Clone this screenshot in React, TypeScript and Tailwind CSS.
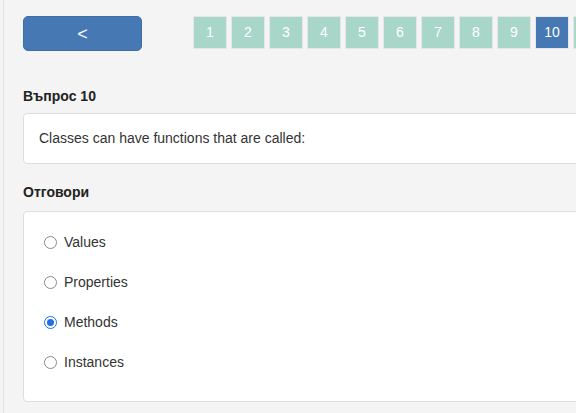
const pages = [1, 2, 3, 4, 5, 6, 7, 8, 9, 10, 11];

const answers = [
    { label: 'Values', checked: false },
    { label: 'Properties', checked: false },
    { label: 'Methods', checked: true },
    { label: 'Instances', checked: false },
];

const Radio = ({ checked }: { checked: boolean }) => (
    <span
        className={`
      flex items-center justify-center w-[13px] h-[13px] rounded-full shrink-0
      ${checked ? 'border border-[#1f6fe5] bg-white' : 'border border-[#8a8a8a] bg-white'}
    `}
    >
        {checked && <span className="w-[7px] h-[7px] rounded-full bg-[#1f6fe5]" />}
    </span>
);

const App = () => {
    return (
        <div
            className="w-[576px] h-[413px] bg-[#f4f4f4] overflow-hidden"
            style={{ fontFamily: '"Liberation Sans", Arial, sans-serif' }}
        >
            <div className="ml-[3px] h-full border-l border-[#e2e2e2] pl-[19px] pt-4">
                {/* Navigation */}
                <div className="flex items-start whitespace-nowrap">
                    <button className="w-[119px] h-[35px] shrink-0 rounded-[5px] bg-[#4679b4] border border-[#3f6ea6] text-white text-[18px] leading-none">
                        &lt;
                    </button>
                    <div className="flex gap-[4px] ml-[51px]">
                        {pages.map((p) => (
                            <div
                                key={p}
                                className={`
                  w-[34px] h-[33px] shrink-0 flex items-center justify-center
                  border border-[#e6e6e6] text-white text-[14px]
                  ${p === 10 ? 'bg-[#4679b4]' : 'bg-[#a8d7c9]'}
                `}
                            >
                                {/* the 11th box is only a sliver at the edge */}
                                {p <= 10 ? p : null}
                            </div>
                        ))}
                    </div>
                </div>

                {/* Question */}
                <h2 className="mt-[35px] text-[14px] leading-[20px] font-bold text-[#222]">Въпрос 10</h2>
                <div className="mt-[7px] w-[600px] h-[51px] flex items-center pl-[15px] bg-white border border-[#dedede] rounded-[4px] text-[14px] text-[#333]">
                    Classes can have functions that are called:
                </div>

                {/* Answers */}
                <h2 className="mt-[18px] text-[14px] leading-[20px] font-bold text-[#222]">Отговори</h2>
                <div className="mt-[9px] w-[600px] h-[191px] pt-[10px] pl-[20px] bg-white border border-[#dedede] rounded-[4px]">
                    {answers.map((a) => (
                        <label key={a.label} className="flex items-center h-[40px] gap-[7px] text-[14px] text-[#333]">
                            <Radio checked={a.checked} />
                            {a.label}
                        </label>
                    ))}
                </div>
            </div>
        </div>
    );
};

export default App;
